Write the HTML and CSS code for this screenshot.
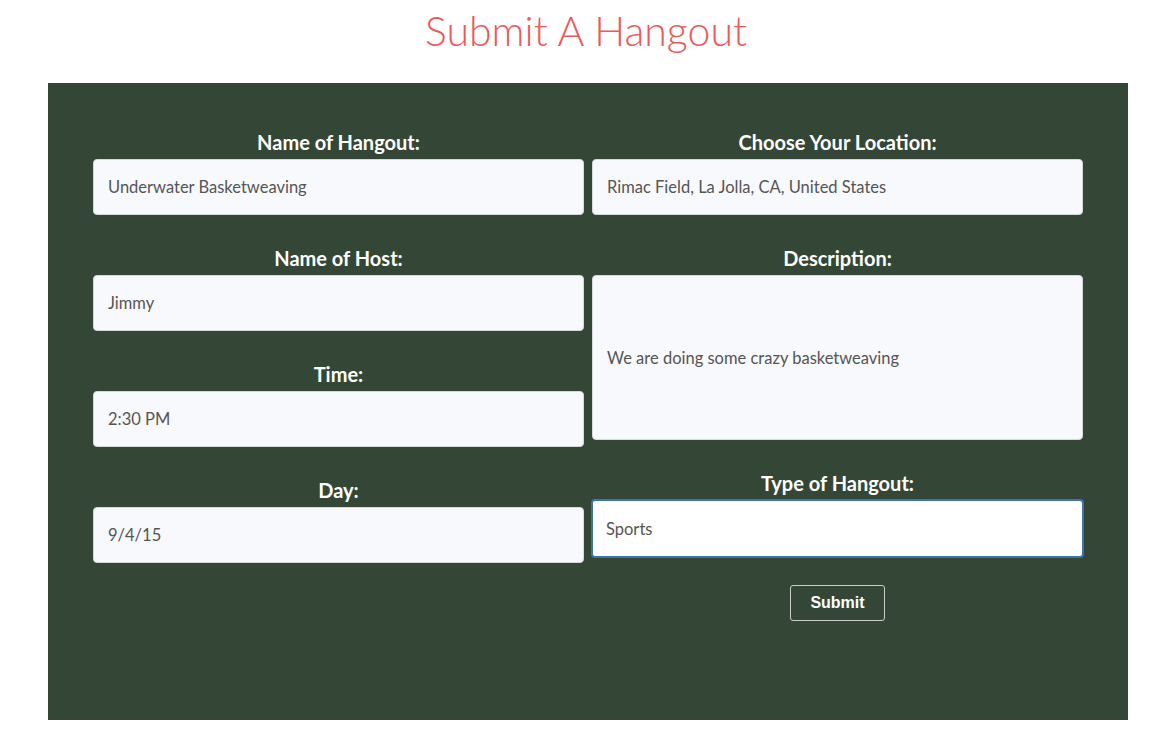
FILE: index.html
```html
<!DOCTYPE html>
<html>
<head>
<meta charset="utf-8">
<link rel="stylesheet" href="styles.css">
</head>
<body>
<h1 class="title">Submit A Hangout</h1>
<form class="panel">
  <div class="col">
    <div class="field">
      <label class="label">Name of Hangout:</label>
      <div class="input">Underwater Basketweaving</div>
    </div>
    <div class="field">
      <label class="label">Name of Host:</label>
      <div class="input">Jimmy</div>
    </div>
    <div class="field">
      <label class="label">Time:</label>
      <div class="input">2:30 PM</div>
    </div>
    <div class="field">
      <label class="label">Day:</label>
      <div class="input">9/4/15</div>
    </div>
  </div>
  <div class="col">
    <div class="field">
      <label class="label">Choose Your Location:</label>
      <div class="input">Rimac Field, La Jolla, CA, United States</div>
    </div>
    <div class="field">
      <label class="label">Description:</label>
      <div class="input textarea">We are doing some crazy basketweaving</div>
    </div>
    <div class="field">
      <label class="label">Type of Hangout:</label>
      <div class="input focused">Sports</div>
    </div>
    <div class="actions">
      <button type="button" class="submit">Submit</button>
    </div>
  </div>
</form>
</body>
</html>
```

FILE: styles.css
```css
html, body {
  margin: 0;
  padding: 0;
  background: #ffffff;
}
body {
  font-family: "Lato", "Open Sans", sans-serif;
}
.title {
  margin: 0;
  height: 83px;
  box-sizing: border-box;
  padding-top: 6px;
  text-align: center;
  font-weight: 300;
  font-size: 41px;
  line-height: 50px;
  color: #f05858;
}
.panel {
  margin: 0 0 0 48px;
  width: 1080px;
  height: 637px;
  box-sizing: border-box;
  background: #344737;
  padding: 48px 45px 0 45px;
  display: grid;
  grid-template-columns: 491px 491px;
  column-gap: 8px;
  align-content: start;
}
.col {
  display: flex;
  flex-direction: column;
}
.field {
  display: flex;
  flex-direction: column;
  margin-bottom: 32px;
}
.label {
  display: block;
  text-align: center;
  color: #ffffff;
  font-weight: 700;
  font-size: 20px;
  line-height: 22px;
  height: 24px;
  margin-bottom: 4px;
}
.input {
  height: 56px;
  box-sizing: border-box;
  background: #f8f9fd;
  border: 1px solid #d6d8dc;
  border-radius: 4px;
  padding: 0 14px;
  display: flex;
  align-items: center;
  font-size: 16.5px;
  color: #555555;
}
.textarea {
  height: 165px;
}
.focused {
  background: #ffffff;
  border: 2px solid #3d74b0;
  height: 59px;
  margin: -1px -1px 0 -1px;
  padding-left: 13px;
}
.actions {
  display: flex;
  justify-content: center;
  margin-top: -5px;
}
.submit {
  font-family: "Liberation Sans", Arial, sans-serif;
  font-weight: 700;
  font-size: 16px;
  color: #ffffff;
  background: transparent;
  border: 1px solid #c8cdc8;
  border-radius: 3px;
  width: 95px;
  height: 36px;
  padding: 0;
}
```
